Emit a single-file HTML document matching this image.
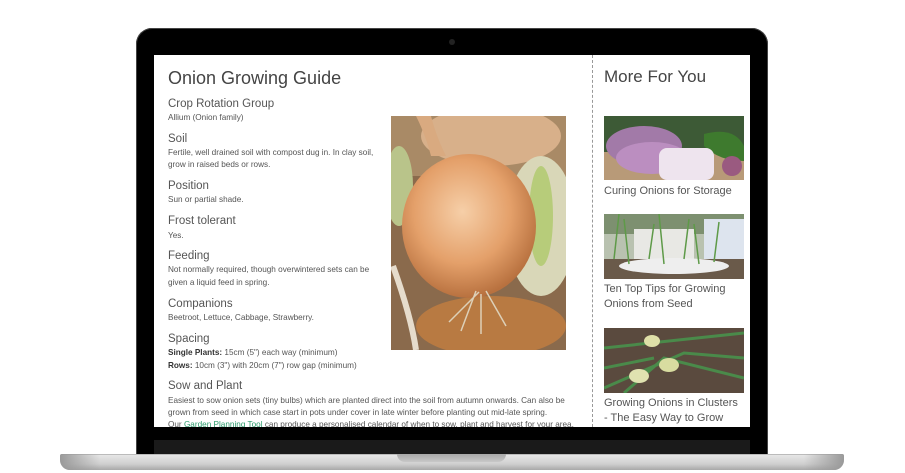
<!DOCTYPE html>
<html><head><meta charset="utf-8"><style>
*{margin:0;padding:0;box-sizing:border-box}
body{width:905px;height:473px;background:#fff;position:relative;overflow:hidden;font-family:"Liberation Sans",sans-serif}
.abs{position:absolute}
.frame{left:136px;top:28px;width:632px;height:430px;background:#000;border-radius:16px 16px 0 0;box-shadow:inset 0 0 0 1px #444}
.screen{left:154px;top:55px;width:596px;height:372px;background:#fff;overflow:hidden}
.h{position:absolute;left:14px;font-size:11.5px;color:#555;white-space:nowrap;line-height:16px}
.b{position:absolute;left:14px;font-size:8.2px;color:#555;white-space:nowrap;line-height:12px}
.b b{color:#333}
.side{position:absolute;left:450px;font-size:11px;color:#555;line-height:15px;white-space:nowrap}
</style></head><body>
<div class="abs frame"></div>
<div class="abs" style="left:449px;top:39px;width:6px;height:6px;border-radius:50%;background:#222"></div>
<div class="abs screen">
  <div class="h" style="top:11px;font-size:18px;line-height:24px;color:#444">Onion Growing Guide</div>
  <div class="h" style="top:41px">Crop Rotation Group</div>
  <div class="b" style="top:57px">Allium (Onion family)</div>
  <div class="h" style="top:76px">Soil</div>
  <div class="b" style="top:92px">Fertile, well drained soil with compost dug in. In clay soil,</div>
  <div class="b" style="top:104px">grow in raised beds or rows.</div>
  <div class="h" style="top:123px">Position</div>
  <div class="b" style="top:139px">Sun or partial shade.</div>
  <div class="h" style="top:158px">Frost tolerant</div>
  <div class="b" style="top:175px">Yes.</div>
  <div class="h" style="top:193px">Feeding</div>
  <div class="b" style="top:209px">Not normally required, though overwintered sets can be</div>
  <div class="b" style="top:222px">given a liquid feed in spring.</div>
  <div class="h" style="top:241px">Companions</div>
  <div class="b" style="top:257px">Beetroot, Lettuce, Cabbage, Strawberry.</div>
  <div class="h" style="top:276px">Spacing</div>
  <div class="b" style="top:292px"><b>Single Plants:</b> 15cm (5") each way (minimum)</div>
  <div class="b" style="top:305px"><b>Rows:</b> 10cm (3") with 20cm (7") row gap (minimum)</div>
  <div class="h" style="top:323px">Sow and Plant</div>
  <div class="b" style="top:340px">Easiest to sow onion sets (tiny bulbs) which are planted direct into the soil from autumn onwards. Can also be</div>
  <div class="b" style="top:352px">grown from seed in which case start in pots under cover in late winter before planting out mid-late spring.</div>
  <div class="b" style="top:364px">Our <span style="color:#2a9a6a">Garden Planning Tool</span> can produce a personalised calendar of when to sow, plant and harvest for your area.</div>
  <svg class="abs" style="left:237px;top:61px" width="175" height="234">
    <defs>
      <radialGradient id="on" cx="45%" cy="40%" r="60%"><stop offset="0" stop-color="#f6cfa8"/><stop offset=".6" stop-color="#e4a06a"/><stop offset="1" stop-color="#b8713f"/></radialGradient>
    </defs>
    <rect width="175" height="234" fill="#8a6a4c"/>
    <rect x="0" y="0" width="175" height="60" fill="#a98a66"/>
    <ellipse cx="100" cy="20" rx="70" ry="30" fill="#d8b08a"/>
    <ellipse cx="150" cy="110" rx="35" ry="70" fill="#d9d7b8"/>
    <ellipse cx="150" cy="100" rx="12" ry="50" fill="#b7cc7a"/>
    <ellipse cx="8" cy="70" rx="14" ry="40" fill="#b9c48a"/>
    <ellipse cx="100" cy="210" rx="75" ry="30" fill="#b87a42"/>
    <ellipse cx="78" cy="110" rx="67" ry="72" fill="url(#on)"/>
    <path d="M25 0 Q35 20 40 40 L55 40 Q45 20 40 0Z" fill="#d9aa80"/>
    <path d="M85 175 l-15 40 M90 178 l0 40 M95 175 l20 35 M88 176 l-30 30" stroke="#ddd0b8" stroke-width="1.5" fill="none"/>
    <path d="M2 150 Q20 200 25 234" stroke="#e6dccc" stroke-width="6" fill="none"/>
  </svg>
  <div class="abs" style="left:438px;top:0;width:0;height:372px;border-left:1px dashed #999"></div>
  <div class="abs" style="left:450px;top:12px;font-size:17px;color:#444;white-space:nowrap">More For You</div>
  <svg class="abs" style="left:450px;top:61px" width="140" height="64">
    <rect width="140" height="64" fill="#3d5a36"/>
    <rect y="36" width="140" height="28" fill="#b89a78"/>
    <ellipse cx="40" cy="30" rx="38" ry="20" fill="#a27aa8"/>
    <ellipse cx="48" cy="42" rx="36" ry="16" fill="#bb8ec0"/>
    <path d="M100 18 Q130 10 140 30 L140 45 Q115 45 100 30Z" fill="#3e7a2e"/>
    <rect x="55" y="32" width="55" height="32" rx="8" fill="#eee4ee"/>
    <circle cx="128" cy="50" r="10" fill="#9a5a80"/>
  </svg>
  <div class="side" style="top:129px">Curing Onions for Storage</div>
  <svg class="abs" style="left:450px;top:159px" width="140" height="65">
    <rect width="140" height="65" fill="#b9c2b0"/>
    <rect x="0" y="0" width="140" height="20" fill="#7d9070"/>
    <rect x="30" y="15" width="60" height="30" fill="#e8e8e4"/>
    <rect x="100" y="5" width="40" height="45" fill="#dde4ee"/>
    <rect y="45" width="140" height="20" fill="#6a5a4a"/>
    <ellipse cx="70" cy="52" rx="55" ry="8" fill="#eee"/>
    <path d="M10 45 L15 0 M25 50 L20 5 M45 45 L50 10 M60 50 L55 0 M80 45 L85 5 M95 50 L90 10 M110 48 L115 8" stroke="#5e9a48" stroke-width="1.5"/>
  </svg>
  <div class="side" style="top:227px">Ten Top Tips for Growing</div>
  <div class="side" style="top:242px">Onions from Seed</div>
  <svg class="abs" style="left:450px;top:273px" width="140" height="65">
    <rect width="140" height="65" fill="#5a4a3e"/>
    <path d="M0 20 L140 5 M0 60 L80 25 L140 30 M20 65 L60 30 L140 50 M0 40 L50 30" stroke="#4a8a4a" stroke-width="3" fill="none"/>
    <ellipse cx="65" cy="37" rx="10" ry="7" fill="#d8dca0"/>
    <ellipse cx="35" cy="48" rx="10" ry="7" fill="#e0e2b0"/>
    <ellipse cx="48" cy="13" rx="8" ry="6" fill="#dfe0a8"/>
  </svg>
  <div class="side" style="top:341px">Growing Onions in Clusters</div>
  <div class="side" style="top:356px">- The Easy Way to Grow</div>
</div>
<div class="abs" style="left:154px;top:440px;width:596px;height:14px;background:#1a1a1a"></div>
<div class="abs" style="left:60px;top:454px;width:784px;height:16px;border-radius:2px 2px 10px 10px;background:linear-gradient(to bottom,#e6e6e6,#cfcfcf 60%,#a8a8a8);border-top:1px solid #bbb"></div>
<div class="abs" style="left:60px;top:454px;width:40px;height:16px;background:linear-gradient(to right,#999,rgba(255,255,255,0));border-radius:2px 0 0 10px"></div>
<div class="abs" style="left:804px;top:454px;width:40px;height:16px;background:linear-gradient(to left,#999,rgba(255,255,255,0));border-radius:0 2px 10px 0"></div>
<div class="abs" style="left:397px;top:454px;width:109px;height:8px;border-radius:0 0 8px 8px;background:linear-gradient(#a8a8a8,#c8c8c8)"></div>
</body></html>
